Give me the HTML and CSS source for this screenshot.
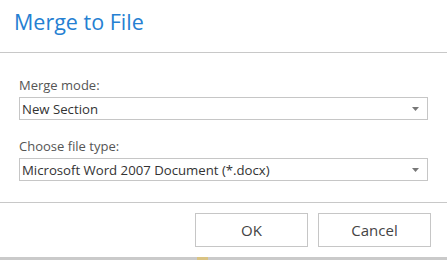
FILE: index.html
```html
<!DOCTYPE html>
<html lang="en">

<head>
    <meta charset="UTF-8">
    <meta name="viewport" content="width=device-width, initial-scale=1.0">
    <title>Merge to File</title>
    <link rel="stylesheet" href="styles.css">
</head>

<body>
    <div class="dialog">
        <header class="dialog-header">
            <h1>Merge to File</h1>
        </header>
        <div class="dialog-body">
            <label>Merge mode:</label>
            <div class="select">
                <span>New Section</span>
                <svg class="arrow" width="7" height="4" viewBox="0 0 7 4"><polygon points="0,0 7,0 3.5,4" /></svg>
            </div>
            <label class="second">Choose file type:</label>
            <div class="select">
                <span>Microsoft Word 2007 Document (*.docx)</span>
                <svg class="arrow" width="7" height="4" viewBox="0 0 7 4"><polygon points="0,0 7,0 3.5,4" /></svg>
            </div>
        </div>
        <footer class="dialog-footer">
            <button class="btn">OK</button>
            <button class="btn">Cancel</button>
        </footer>
    </div>
    <div class="page-below">
        <div class="page-item"></div>
    </div>
</body>

</html>
```

FILE: styles.css
```css
body {
    margin: 0;
    font-family: "Open Sans", Arial, sans-serif;
    background-color: #cacaca;
    color: #444;
}

.dialog {
    width: 447px;
    height: 257px;
    background-color: #fff;
}

.dialog-header {
    height: 53px;
    padding: 7px 14px 0;
    border-bottom: 1px solid #c8c8c8;
    box-sizing: border-box;
}

h1 {
    margin: 0;
    font-size: 21.5px;
    line-height: 30px;
    font-weight: 400;
    color: #2580d2;
}

.dialog-body {
    padding: 24px 19px 21px;
    display: flex;
    flex-direction: column;
}

.dialog-body label {
    font-size: 13px;
    line-height: 16px;
    color: #555;
    margin-bottom: 4px;
}

.dialog-body label.second {
    margin-top: 18px;
}

.select {
    height: 23px;
    border: 1px solid #c6c6c6;
    box-sizing: border-box;
    display: flex;
    align-items: center;
    justify-content: space-between;
    padding: 0 8px 0 2px;
    font-size: 13.2px;
    color: #333;
}

.arrow {
    fill: #777;
}

.dialog-footer {
    height: 54px;
    border-top: 1px solid #c8c8c8;
    box-sizing: border-box;
    padding: 10px 16px 0 0;
    display: flex;
    justify-content: flex-end;
    align-items: flex-start;
    gap: 10px;
}

.btn {
    width: 113px;
    height: 34px;
    background-color: #fff;
    border: 1px solid #c6c6c6;
    font-family: "Open Sans", Arial, sans-serif;
    font-size: 15px;
    color: #444;
    padding: 0;
}

.page-below {
    height: 3px;
    background-color: #cacaca;
}

.page-item {
    margin-left: 197px;
    width: 11px;
    height: 3px;
    background-color: #d9c383;
}
```
